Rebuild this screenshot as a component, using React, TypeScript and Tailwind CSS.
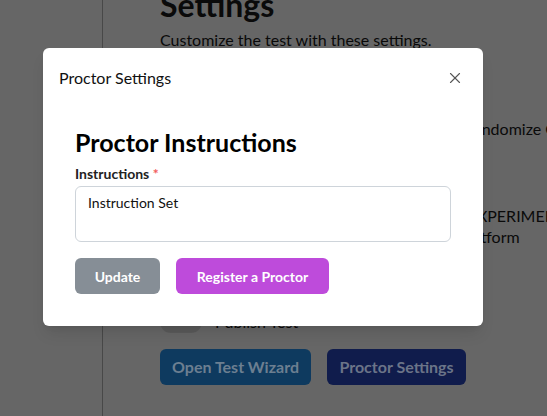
import { X } from 'lucide-react';

function Toggle() {
  return <div className="w-[42px] h-[22px] rounded-full bg-[#5a5a5a] shrink-0" />;
}

export default function App() {
  return (
    <div className="relative w-full h-[416px] overflow-hidden bg-[#666666] font-['Lato',sans-serif] text-[#0a0a0a]">
      {/* Page behind the dialog */}
      <div className="flex h-full">
        <div className="w-[103px] shrink-0 border-r border-[#484848]" />
        <div className="pl-[57px] -mt-[10px] flex flex-col">
          <h1 className="text-[32px] font-bold leading-[30px]">Settings</h1>
          <p className="text-[16px] leading-[24px] mt-[8px]">Customize the test with these settings.</p>

          <div className="flex items-center gap-[13px] mt-[65px]">
            <Toggle />
            <span className="text-[16px] whitespace-nowrap">Shuffle question order per student: Randomize Groups</span>
          </div>

          <div className="flex items-start gap-[13px] mt-[64px]">
            <Toggle />
            <div className="text-[16px] leading-[21px] whitespace-nowrap">
              <p>Enable all of the features marked as EXPERIMENTAL</p>
              <p>across this total online assessment platform</p>
            </div>
          </div>

          <div className="flex items-center gap-[13px] mt-[63px]">
            <Toggle />
            <span className="text-[16px]">Publish Test</span>
          </div>

          <div className="flex gap-[16px] mt-[15px]">
            <button className="h-[36px] w-[151px] rounded-md bg-[#0e3a5f] text-[#6c7f91] font-bold text-[16px]">Open Test Wizard</button>
            <button className="h-[36px] w-[139px] rounded-md bg-[#101c4c] text-[#6b7488] font-bold text-[16px]">Proctor Settings</button>
          </div>
        </div>
      </div>

      {/* Dialog */}
      <div className="absolute left-[43px] top-[48px] w-[440px] h-[278px] rounded-md bg-white shadow-lg flex flex-col">
        <div className="flex items-center justify-between pl-4 pr-[19px] h-[60px]">
          <span className="text-[16px] text-[#111]">Proctor Settings</span>
          <X className="w-[18px] h-[18px] text-[#555]" strokeWidth={1.5} />
        </div>
        <div className="px-8 pt-[18px]">
          <h2 className="text-[25px] font-bold leading-[32px] text-black">Proctor Instructions</h2>
          <label className="block mt-[6px] text-[14px] font-bold leading-[20px] text-[#222]">
            Instructions <span className="text-[#f25c5c]">*</span>
          </label>
          <div className="mt-[2px] h-[56px] rounded-md border border-[#ced4da] px-[12px] pt-[5px] text-[14px] text-[#111]">
            Instruction Set
          </div>
          <div className="flex gap-[16px] mt-[16px]">
            <button className="h-[36px] w-[85px] rounded-md bg-[#868e96] text-white font-bold text-[14px]">Update</button>
            <button className="h-[36px] w-[153px] rounded-md bg-[#be4bdb] text-white font-bold text-[14px]">Register a Proctor</button>
          </div>
        </div>
      </div>
    </div>
  );
}
